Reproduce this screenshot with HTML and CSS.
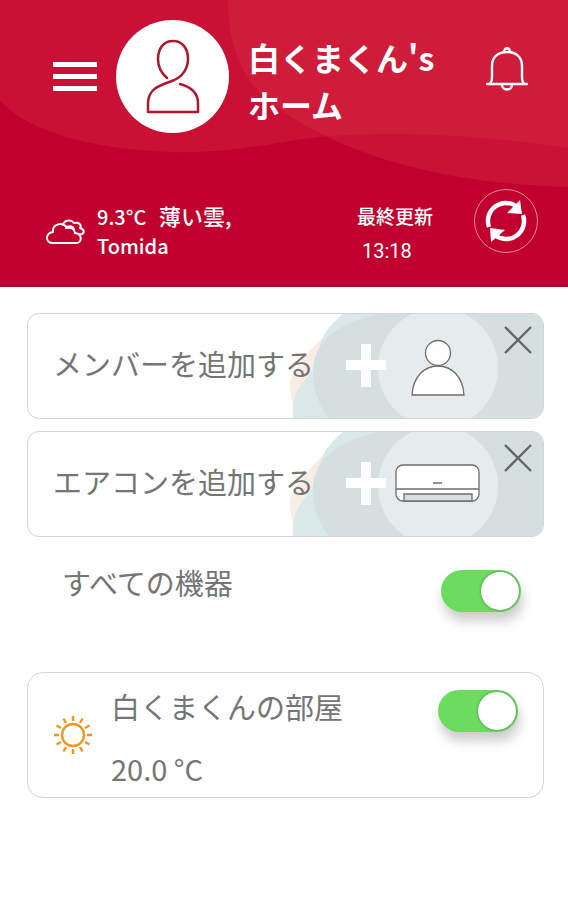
FILE: index.html
```
<!DOCTYPE html>
<html lang="ja">
<head>
  <meta charset="UTF-8">
  <meta name="viewport" content="width=device-width, initial-scale=1">
  <title>白くまくん's ホーム</title>
  <link rel="stylesheet" href="styles.css">
</head>
<body>
  <header class="header">
    <svg class="header-bg" viewBox="0 0 568 287" preserveAspectRatio="none" aria-hidden="true">
      <path d="M0 0H568V148C510 139 450 134 395 134C350 134 318 136 284 142C240 150 205 153 170 152C90 149 30 132 0 101Z" fill="#ca1034"/>
      <path d="M228 0C228 55 248 90 284 112C350 158 450 184 568 187V0Z" fill="#da3448" fill-opacity="0.35"/>
    </svg>

    <div class="top-bar">
      <button class="icon-btn" aria-label="メニュー">
        <svg width="44" height="30" viewBox="0 0 44 30" fill="#fff">
          <path d="M0 0H44V5H0ZM0 12H44V17H0ZM0 24H44V29H0Z"/>
        </svg>
      </button>
      <div class="avatar">
        <svg width="54" height="76" viewBox="0 0 54 76" fill="none" stroke="#b3142f" stroke-width="2.5" stroke-linecap="round" stroke-linejoin="round">
          <path d="M21 39C15 34 12 27 12 20C12 9 18 2 27 2C36 2 42 9 42 20C42 29 37 38 26 42C12 47 2 50 2 65V73H52V64C52 54 45 48 34 45"/>
        </svg>
      </div>
      <h1 class="title">白くまくん's<br>ホーム</h1>
      <button class="icon-btn bell" aria-label="お知らせ">
        <svg width="42" height="44" viewBox="0 0 42 44" fill="none" stroke="#fff" stroke-width="2.4" stroke-linejoin="round" stroke-linecap="round">
          <path d="M1 37H41M3 37C6 35 6 33 6 29V19C6 10 12 5 21 5C30 5 36 10 36 19V29C36 33 36 35 39 37"/>
          <path d="M18 5C18 0 24 0 24 5M16 38C16 44 26 44 26 38"/>
        </svg>
      </button>
    </div>

    <div class="weather">
      <svg class="cloud" width="40" height="26" viewBox="0 0 40 26" fill="none" stroke="#fff" stroke-width="2" stroke-linejoin="round" stroke-linecap="round">
        <path d="M7 24C-1 24 -1 14 7 13C6 5 17 2 21 9C26 8 29 11 29 14C37 15 36 24 30 24Z"/>
        <path d="M17 6C18 1 25 0 28 4C33 3 36 6 34 9C40 11 38 16 33 15M20 9C22 6 27 7 28 10"/>
      </svg>
      <p class="weather-text">9.3°C <span class="sky">薄い雲,</span><br>Tomida</p>
      <div class="updated">
        <span>最終更新</span>
        <time class="time">13:18</time>
      </div>
      <button class="refresh" aria-label="更新">
        <svg width="42" height="42" viewBox="0 0 42 42" fill="none" stroke="#fff" stroke-width="4.5">
          <path d="M4 27A18 18 0 0 1 31 6M38 15A18 18 0 0 1 11 36"/>
          <path d="M35 0L37 14L22 13ZM6 42L5 28L20 30Z" fill="#fff" stroke="none"/>
        </svg>
      </button>
    </div>
  </header>

  <main class="content">
    <section class="card add-card">
      <svg class="art" width="256" height="106" viewBox="0 0 256 106" aria-hidden="true">
        <path d="M36 24C24 35 9 50 3 67C3 78 4 84 6 90L30 60Z" fill="#f8ece5"/>
        <path d="M56 0C46 8 38 17 34 28C31 38 32 46 25 57C16 69 6 78 6 95V106H120V0Z" fill="#d9e8e8"/>
        <path d="M90 0C50 10 26 28 26 57C26 78 33 94 44 106H256V0Z" fill="#d6dfe0"/>
        <circle cx="151" cy="54" r="60" fill="#e6ebeb"/>
        <path d="M74 30H84V46H99V56H84V73H74V56H59V46H74Z" fill="#fff"/>
        <g fill="#fff" stroke="#6e6e6e" stroke-width="1.3">
          <circle cx="151" cy="39" r="12.5"/>
          <path d="M125 81C126 63 137 52 151 52C165 52 176 63 177 81Z"/>
        </g>
      </svg>
      <button class="add-btn">メンバーを追加する</button>
      <button class="close" aria-label="閉じる">
        <svg width="28" height="28" viewBox="0 0 28 28" stroke="#666" stroke-width="2.4">
          <path d="M1 1L27 27M27 1L1 27"/>
        </svg>
      </button>
    </section>

    <section class="card add-card">
      <svg class="art" width="256" height="106" viewBox="0 0 256 106" aria-hidden="true">
        <path d="M36 24C24 35 9 50 3 67C3 78 4 84 6 90L30 60Z" fill="#f8ece5"/>
        <path d="M56 0C46 8 38 17 34 28C31 38 32 46 25 57C16 69 6 78 6 95V106H120V0Z" fill="#d9e8e8"/>
        <path d="M90 0C50 10 26 28 26 57C26 78 33 94 44 106H256V0Z" fill="#d6dfe0"/>
        <circle cx="151" cy="54" r="60" fill="#e6ebeb"/>
        <path d="M74 30H84V46H99V56H84V73H74V56H59V46H74Z" fill="#fff"/>
        <g fill="#fff" stroke="#6e6e6e" stroke-width="1.3">
          <rect x="109" y="33" width="83" height="36" rx="7"/>
          <path d="M109 57H192M146 51H155"/>
          <path d="M117 69V62H185V69Z" fill="#d6dfe0"/>
        </g>
      </svg>
      <button class="add-btn">エアコンを追加する</button>
      <button class="close" aria-label="閉じる">
        <svg width="28" height="28" viewBox="0 0 28 28" stroke="#666" stroke-width="2.4">
          <path d="M1 1L27 27M27 1L1 27"/>
        </svg>
      </button>
    </section>

    <div class="all-devices">
      <label for="all">すべての機器</label>
      <input type="checkbox" class="switch" id="all" checked>
    </div>

    <section class="card room">
      <svg class="sun" width="40" height="40" viewBox="0 0 40 40" fill="none" stroke="#f7941e" stroke-width="2.4">
        <circle cx="20" cy="20" r="11"/>
        <path d="M20 1V6M20 34V39M1 20H6M34 20H39M10.500 3.500L13 8M27 32L29.500 36.500M3.500 10.500L8 13M32 27L36.500 29.500M29.500 3.500L27 8M13 32L10.500 36.500M36.500 10.500L32 13M8 27L3.500 29.500"/>
      </svg>
      <div class="room-info">
        <label for="room">白くまくんの部屋</label>
        <span>20.0 °C</span>
      </div>
      <input type="checkbox" class="switch" id="room" checked>
    </section>
  </main>
</body>
</html>
```

FILE: styles.css
```
* {
  box-sizing: border-box;
}

body {
  margin: 0;
  background-color: #fff;
  color: #757575;
  font-family: "Noto Sans CJK JP", sans-serif;
  font-size: 29px;
  line-height: 42px;
}

button {
  padding: 0;
  border: none;
  background: none;
  color: inherit;
  font: inherit;
  cursor: pointer;
}

svg {
  display: block;
  flex-shrink: 0;
}

/* header */
.header {
  position: relative;
  padding: 20px 30px 34px 46px;
  background-color: #c2002f;
  color: #fff;
}

.header-bg {
  position: absolute;
  top: 0;
  left: 0;
  width: 100%;
  height: 100%;
}

.top-bar,
.weather {
  position: relative;
  display: flex;
}

.top-bar {
  align-items: center;
  padding: 0 10px 0 7px;
}

.avatar {
  display: flex;
  align-items: center;
  justify-content: center;
  flex-shrink: 0;
  width: 113px;
  height: 113px;
  margin: 0 19px;
  border-radius: 50%;
  background-color: #fff;
}

.title {
  flex: 1;
  margin: 0;
  padding-top: 8px;
  font-size: 32px;
  font-weight: bold;
  line-height: 47px;
}

.bell {
  padding-bottom: 16px;
}

.weather {
  align-items: flex-start;
  height: 64px;
  margin-top: 56px;
  font-size: 20px;
  font-weight: 500;
  line-height: 29px;
}

.cloud {
  margin: 30px 11px 0 0;
}

.weather-text {
  flex: 1;
  margin: 0;
  padding-top: 12px;
}

.sky {
  padding-left: 8px;
  font-size: 22px;
}

.updated {
  display: flex;
  flex-direction: column;
  gap: 7px;
  margin-right: 41px;
  padding-top: 12px;
  font-size: 19px;
}

.time {
  padding-left: 5px;
  font-family: Roboto, sans-serif;
  font-size: 20px;
  font-weight: normal;
}

.refresh {
  display: flex;
  align-items: center;
  justify-content: center;
  width: 64px;
  height: 64px;
  border: 1px solid #e58a9c;
  border-radius: 50%;
}

/* content */
.content {
  padding: 26px 24px 26px 27px;
}

.card {
  position: relative;
  border: 1px solid #d2d5d5;
  border-radius: 12px;
  background-color: #fff;
}

.add-card {
  height: 106px;
  margin-bottom: 12px;
  overflow: hidden;
}

.art {
  position: absolute;
  top: 0;
  right: 0;
}

.add-btn {
  position: relative;
  width: 100%;
  height: 100%;
  padding: 0 0 6px 25px;
  text-align: left;
}

.close {
  position: absolute;
  top: 12px;
  right: 11px;
}

.all-devices {
  display: flex;
  align-items: flex-start;
  justify-content: space-between;
  padding: 12px 23px 60px 35px;
}

.all-devices .switch {
  margin-top: 9px;
}

.switch {
  appearance: none;
  flex-shrink: 0;
  width: 80px;
  height: 42px;
  margin: 0;
  padding: 2px;
  border-radius: 21px;
  background-color: #6bdc5f;
  box-shadow: 2px 9px 12px rgba(0, 0, 0, 0.2);
  cursor: pointer;
}

.switch::before {
  content: "";
  display: block;
  width: 38px;
  height: 38px;
  border-radius: 50%;
  background-color: #fff;
  box-shadow: 0 0 3px rgba(0, 0, 0, 0.4);
}

.switch:checked::before {
  margin-left: auto;
}

.switch:not(:checked) {
  background-color: #ccc;
}

.room {
  display: flex;
  align-items: flex-start;
  padding: 12px 25px 8px;
  border-radius: 16px;
}

.sun {
  margin: 30px 18px 0 0;
}

.room-info {
  display: flex;
  flex: 1;
  flex-direction: column;
  gap: 20px;
}

.room .switch {
  margin-top: 5px;
}
```
